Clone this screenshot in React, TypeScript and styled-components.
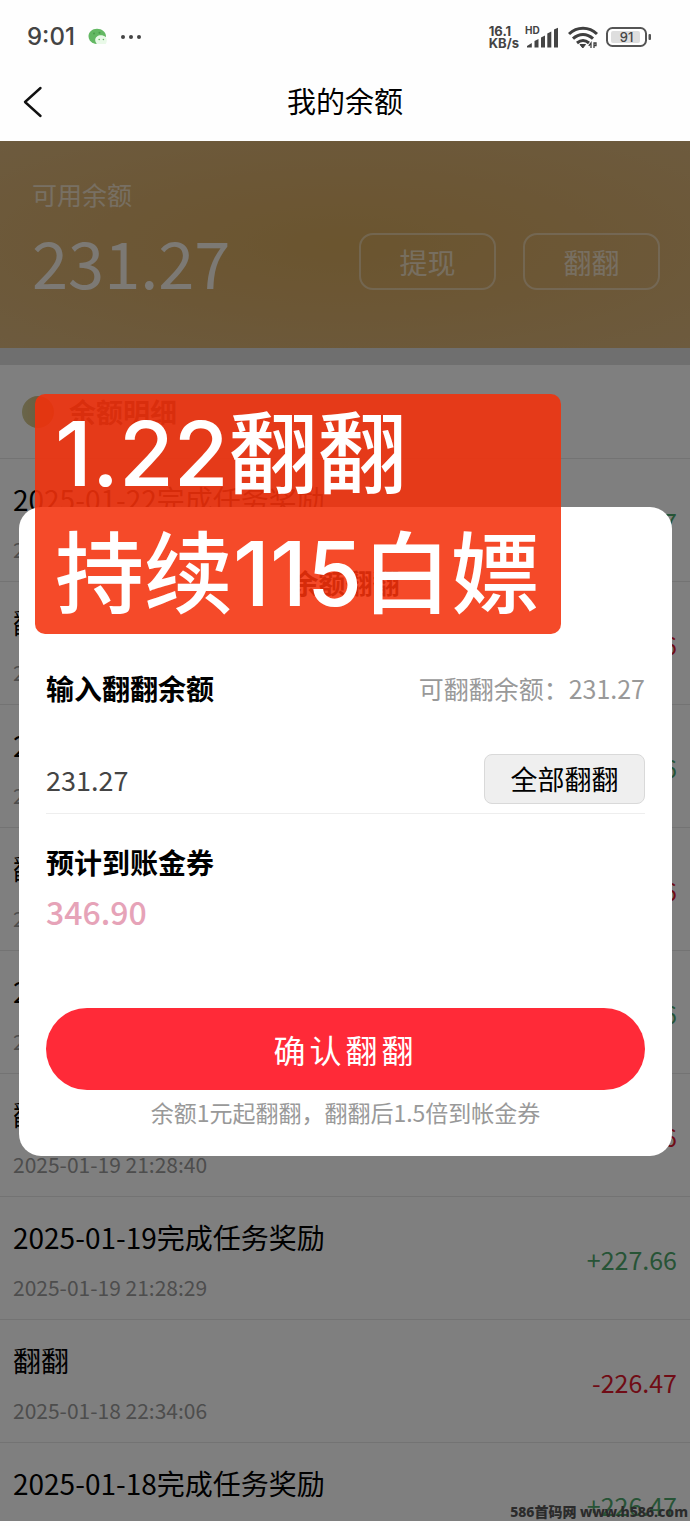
import React, { useState } from "react";
import styled, { createGlobalStyle } from "styled-components";

const GlobalStyle = createGlobalStyle`
  *, *::before, *::after { box-sizing: border-box; }
  body {
    margin: 0;
    background: #fefefe;
    color: #000;
    font-family: "Noto Sans CJK SC", "Noto Sans", sans-serif;
  }
  h1, h2, p, ul { margin: 0; padding: 0; }
  button, input { font-family: inherit; }
`;

const Page = styled.div`
  position: relative;
  display: flex;
  flex-direction: column;
  height: 100vh;
  padding-bottom: 5px;
  overflow: hidden;
`;

const StatusBar = styled.div`
  display: flex;
  align-items: center;
  justify-content: space-between;
  height: 62px;
  padding: 12px 38px 0 27px;
  color: #444;
  font-family: Inter, sans-serif;
`;

const StatusGroup = styled.div<{ $gap: number }>`
  display: flex;
  align-items: center;
  gap: ${(p) => p.$gap}px;
`;

const Clock = styled.span`
  font-size: 24px;
  font-weight: 500;
  line-height: 30px;
`;

const NetSpeed = styled.span`
  font-size: 13px;
  font-weight: 700;
  line-height: 12px;
`;

const TitleBar = styled.header`
  display: grid;
  grid-template-columns: 1fr auto 1fr;
  align-items: center;
  height: 79px;
  padding: 0 20px;
`;

const BackButton = styled.button`
  display: flex;
  justify-self: start;
  padding: 0;
  border: 0;
  background: none;
  color: #111;
`;

const PageTitle = styled.h1`
  padding-bottom: 3px;
  font-size: 29px;
  font-weight: 400;
  line-height: 40px;
`;

const Content = styled.main`
  position: relative;
  flex: 1;
  min-height: 0;
  overflow: hidden;
  background: #fff;
`;

const Hero = styled.section`
  display: flex;
  align-items: flex-end;
  justify-content: space-between;
  padding: 35px 30px 49px 32px;
  color: #fff;
  background: radial-gradient(ellipse at 50% 50%, #d6aa5e 0%, #d9ae6b 45%, #dab67d 100%);
`;

const HeroLabel = styled.p`
  margin-bottom: 11px;
  font-size: 25px;
  line-height: 36px;
  opacity: 0.6;
`;

const HeroValue = styled.p`
  font-size: 65px;
  line-height: 76px;
  opacity: 0.85;
`;

const HeroActions = styled.div`
  display: flex;
  gap: 27px;
  padding-bottom: 9px;
`;

const OutlineButton = styled.button`
  width: 137px;
  height: 57px;
  padding: 0;
  border: 2px solid rgba(255, 255, 255, 0.4);
  border-radius: 14px;
  background: none;
  color: rgba(255, 255, 255, 0.62);
  font-size: 28px;
  line-height: 40px;
`;

const Strip = styled.div`
  height: 17px;
  background: #dfdfdf;
`;

const SectionHead = styled.div`
  display: flex;
  align-items: center;
  gap: 15px;
  height: 94px;
  padding: 0 22px;
  border-bottom: 1px solid #e6e6e6;
`;

const Coin = styled.span`
  width: 32px;
  height: 32px;
  border-radius: 50%;
  background: linear-gradient(90deg, #d2cb96, #d9ae6b);
`;

const SectionTitle = styled.h2`
  color: #333;
  font-size: 27px;
  font-weight: 700;
  line-height: 40px;
`;

const RecordList = styled.ul`
  list-style: none;
`;

const Record = styled.li`
  display: flex;
  align-items: center;
  justify-content: space-between;
  padding: 20px 13px 17px;
  border-bottom: 1px solid #e6e6e6;
`;

const RecordName = styled.p`
  margin-bottom: 15px;
  font-size: 28px;
  line-height: 40px;
`;

const RecordTime = styled.p`
  color: #9a9a9a;
  font-size: 21px;
  line-height: 30px;
`;

const RecordAmount = styled.span<{ $income: boolean }>`
  padding-bottom: 2px;
  color: ${(p) => (p.$income ? "#4ea86c" : "#e0182c")};
  font-size: 25px;
  line-height: 36px;
`;

const Mask = styled.div`
  position: absolute;
  inset: 0;
  display: flex;
  align-items: center;
  padding: 0 18px 0 19px;
  background: rgba(0, 0, 0, 0.5);
`;

const Dialog = styled.form`
  flex: 1;
  padding: 56px 27px 25px;
  border-radius: 22px;
  background: #fff;
`;

const DialogTitle = styled.h2`
  margin-bottom: 65px;
  font-size: 27px;
  font-weight: 700;
  line-height: 40px;
  text-align: center;
`;

const LabelRow = styled.div`
  display: flex;
  align-items: center;
  justify-content: space-between;
  margin-bottom: 46px;
`;

const FieldLabel = styled.label`
  font-size: 28px;
  font-weight: 700;
  line-height: 40px;
`;

const ResultLabel = styled.p`
  margin-bottom: 4px;
  font-size: 28px;
  font-weight: 700;
  line-height: 40px;
`;

const Available = styled.span`
  color: #999;
  font-size: 25px;
  line-height: 36px;
`;

const FieldRow = styled.div`
  display: flex;
  align-items: center;
  margin-bottom: 28px;
  padding-bottom: 9px;
  border-bottom: 1px solid #eee;
`;

const AmountInput = styled.input`
  flex: 1;
  min-width: 0;
  height: 40px;
  padding: 2px 0 0;
  border: 0;
  outline: 0;
  background: none;
  color: #444;
  font-size: 27px;
`;

const AllButton = styled.button`
  width: 161px;
  height: 50px;
  padding: 0;
  border: 1px solid #d9d9d9;
  border-radius: 8px;
  background: #efefef;
  color: #000;
  font-size: 27px;
  line-height: 40px;
`;

const Result = styled.output`
  display: block;
  margin-bottom: 72px;
  color: #e6a3b8;
  font-size: 32px;
  font-weight: 500;
  line-height: 50px;
`;

const ConfirmButton = styled.button`
  display: block;
  width: 100%;
  height: 82px;
  margin-bottom: 5px;
  padding: 0;
  border: 0;
  border-radius: 41px;
  background: #ff2a38;
  color: #fff;
  font-size: 32px;
  letter-spacing: 4px;
`;

const Note = styled.p`
  padding-bottom: 2px;
  color: #999;
  font-size: 23px;
  line-height: 34px;
  text-align: center;
`;

const Banner = styled.div`
  position: absolute;
  top: 394px;
  left: 35px;
  padding: 0 21px 0 20px;
  border-radius: 10px;
  background: rgba(244, 49, 11, 0.88);
  color: #fff;
  font-family: Inter, "Noto Sans CJK SC", sans-serif;
  font-size: 89px;
  font-weight: 500;
  line-height: 120px;
  white-space: nowrap;
`;

const Watermark = styled.div`
  position: absolute;
  right: 2px;
  bottom: 4px;
  color: #2b2b2b;
  font-family: "Noto Sans", "Noto Sans CJK SC", sans-serif;
  font-size: 14px;
  font-weight: 800;
  line-height: 20px;
`;

const records = [
  { name: "2025-01-22完成任务奖励", time: "2025-01-22 08:52:17", amount: "+231.27" },
  { name: "翻翻", time: "2025-01-21 21:40:12", amount: "-230.06" },
  { name: "2025-01-21完成任务奖励", time: "2025-01-21 21:39:58", amount: "+230.06" },
  { name: "翻翻", time: "2025-01-20 21:33:25", amount: "-228.86" },
  { name: "2025-01-20完成任务奖励", time: "2025-01-20 21:33:10", amount: "+228.86" },
  { name: "翻翻", time: "2025-01-19 21:28:40", amount: "-227.66" },
  { name: "2025-01-19完成任务奖励", time: "2025-01-19 21:28:29", amount: "+227.66" },
  { name: "翻翻", time: "2025-01-18 22:34:06", amount: "-226.47" },
  { name: "2025-01-18完成任务奖励", time: "2025-01-18 22:33:51", amount: "+226.47" },
];

const ChatIcon = () => (
  <svg width="19" height="18" viewBox="0 0 19 18" aria-hidden="true">
    <path d="M9 .8C4.200.8.500 4 .5 8.200c0 3.300 2 6 5.500 7.300l2 .5L18 8.500C17.800 4 14 .8 9 .8z" fill="#63b863" />
    <path d="M13 7.300c-3.400 0-5.800 2.100-5.800 4.800 0 1.600.8 3 2.200 3.900h8.200c.8-.9 1.200-2.300 1.200-3.500 0-3-2.500-5.200-5.800-5.200z" fill="#e9f9e8" />
    <circle cx="6" cy="5.500" r="1" fill="#4a9a4a" />
    <circle cx="11.500" cy="4.800" r="1" fill="#4a9a4a" />
    <circle cx="11.200" cy="11.500" r=".8" fill="#63b863" />
    <circle cx="15.400" cy="11.500" r=".8" fill="#63b863" />
  </svg>
);

const DotsIcon = () => (
  <svg width="22" height="6" viewBox="0 0 22 6" fill="#444" aria-hidden="true">
    <circle cx="3" cy="3" r="2" />
    <circle cx="11" cy="3" r="2" />
    <circle cx="19" cy="3" r="2" />
  </svg>
);

const SignalIcon = () => (
  <svg width="33" height="24" viewBox="0 0 33 24" overflow="visible" aria-hidden="true">
    <text x="-2" y="9" fontFamily="Inter, sans-serif" fontSize="10" fontWeight="700" fill="#444">HD</text>
    <g fill="#444">
      <path d="M0 22.500v-1.500l4.800-3v4.500z" />
      <path d="M7.500 22.500v-6.500l4-2v8.500z" />
      <path d="M14 22.500v-10l4-2v12z" />
      <path d="M20.300 22.500V8.500l4-2v16z" />
      <path d="M27 22.500v-18l4-1.700v19.700z" />
    </g>
  </svg>
);

const WifiIcon = () => (
  <svg width="30" height="24" viewBox="0 0 30 24" fill="none" stroke="#3f3f3f" strokeWidth="3" aria-hidden="true">
    <path d="M1 9C9 1.200 21 1.200 29 9" />
    <path d="M5 13.700c6-5.600 14-5.600 20 0" />
    <path d="M9 18c4-3.300 8-3.300 12 0" />
    <path d="M12 19.500h5.500l-2.700 3.500z" fill="#3f3f3f" strokeWidth="1" strokeLinejoin="round" />
    <path d="M23 23v-5l-2.200 2.800M26 23v-5h2v2.500h-2" strokeWidth="1.300" />
  </svg>
);

const BatteryIcon = () => (
  <svg width="46" height="21" viewBox="0 0 46 21" aria-hidden="true">
    <rect x="1" y="1" width="39" height="18" rx="5.500" fill="#fff" stroke="#555" strokeWidth="2" />
    <rect x="5" y="4" width="29" height="12" rx="2" fill="#dedede" />
    <rect x="42.500" y="7" width="2.500" height="6" rx="1" fill="#555" />
    <text x="20.500" y="14.500" textAnchor="middle" fontFamily="Inter, sans-serif" fontSize="13" fontWeight="500" fill="#444">91</text>
  </svg>
);

const BackIcon = () => (
  <svg width="24" height="32" viewBox="0 0 24 32" fill="none" stroke="currentColor" strokeWidth="2.400" strokeLinecap="round" strokeLinejoin="round" aria-hidden="true">
    <path d="M20.500 2L5 16l15.500 14" />
  </svg>
);

export default function App() {
  const [amount, setAmount] = useState("231.27");
  const result = (Math.floor(Number(amount) * 15) / 10 || 0).toFixed(2);

  return (
    <Page>
      <GlobalStyle />
      <StatusBar>
        <StatusGroup $gap={13}>
          <Clock>9:01</Clock>
          <ChatIcon />
          <DotsIcon />
        </StatusGroup>
        <StatusGroup $gap={8}>
          <NetSpeed>
            16.1
            <br />
            KB/s
          </NetSpeed>
          <SignalIcon />
          <WifiIcon />
          <BatteryIcon />
        </StatusGroup>
      </StatusBar>
      <TitleBar>
        <BackButton type="button" aria-label="返回">
          <BackIcon />
        </BackButton>
        <PageTitle>我的余额</PageTitle>
      </TitleBar>

      <Content>
        <Hero>
          <div>
            <HeroLabel>可用余额</HeroLabel>
            <HeroValue>231.27</HeroValue>
          </div>
          <HeroActions>
            <OutlineButton type="button">提现</OutlineButton>
            <OutlineButton type="button">翻翻</OutlineButton>
          </HeroActions>
        </Hero>
        <Strip />
        <SectionHead>
          <Coin />
          <SectionTitle>余额明细</SectionTitle>
        </SectionHead>
        <RecordList>
          {records.map((r) => (
            <Record key={r.time}>
              <div>
                <RecordName>{r.name}</RecordName>
                <RecordTime>{r.time}</RecordTime>
              </div>
              <RecordAmount $income={r.amount.startsWith("+")}>{r.amount}</RecordAmount>
            </Record>
          ))}
        </RecordList>

        <Mask>
          <Dialog onSubmit={(e) => e.preventDefault()}>
            <DialogTitle>余额翻翻</DialogTitle>
            <LabelRow>
              <FieldLabel htmlFor="amount">输入翻翻余额</FieldLabel>
              <Available>可翻翻余额：231.27</Available>
            </LabelRow>
            <FieldRow>
              <AmountInput
                id="amount"
                inputMode="decimal"
                value={amount}
                onChange={(e) => setAmount(e.target.value)}
              />
              <AllButton type="button" onClick={() => setAmount("231.27")}>
                全部翻翻
              </AllButton>
            </FieldRow>
            <ResultLabel>预计到账金券</ResultLabel>
            <Result htmlFor="amount">{result}</Result>
            <ConfirmButton type="submit">确认翻翻</ConfirmButton>
            <Note>余额1元起翻翻，翻翻后1.5倍到帐金券</Note>
          </Dialog>
        </Mask>
      </Content>

      <Banner>
        1.22翻翻
        <br />
        持续115白嫖
      </Banner>
      <Watermark>586首码网 www.h586.com</Watermark>
    </Page>
  );
}
